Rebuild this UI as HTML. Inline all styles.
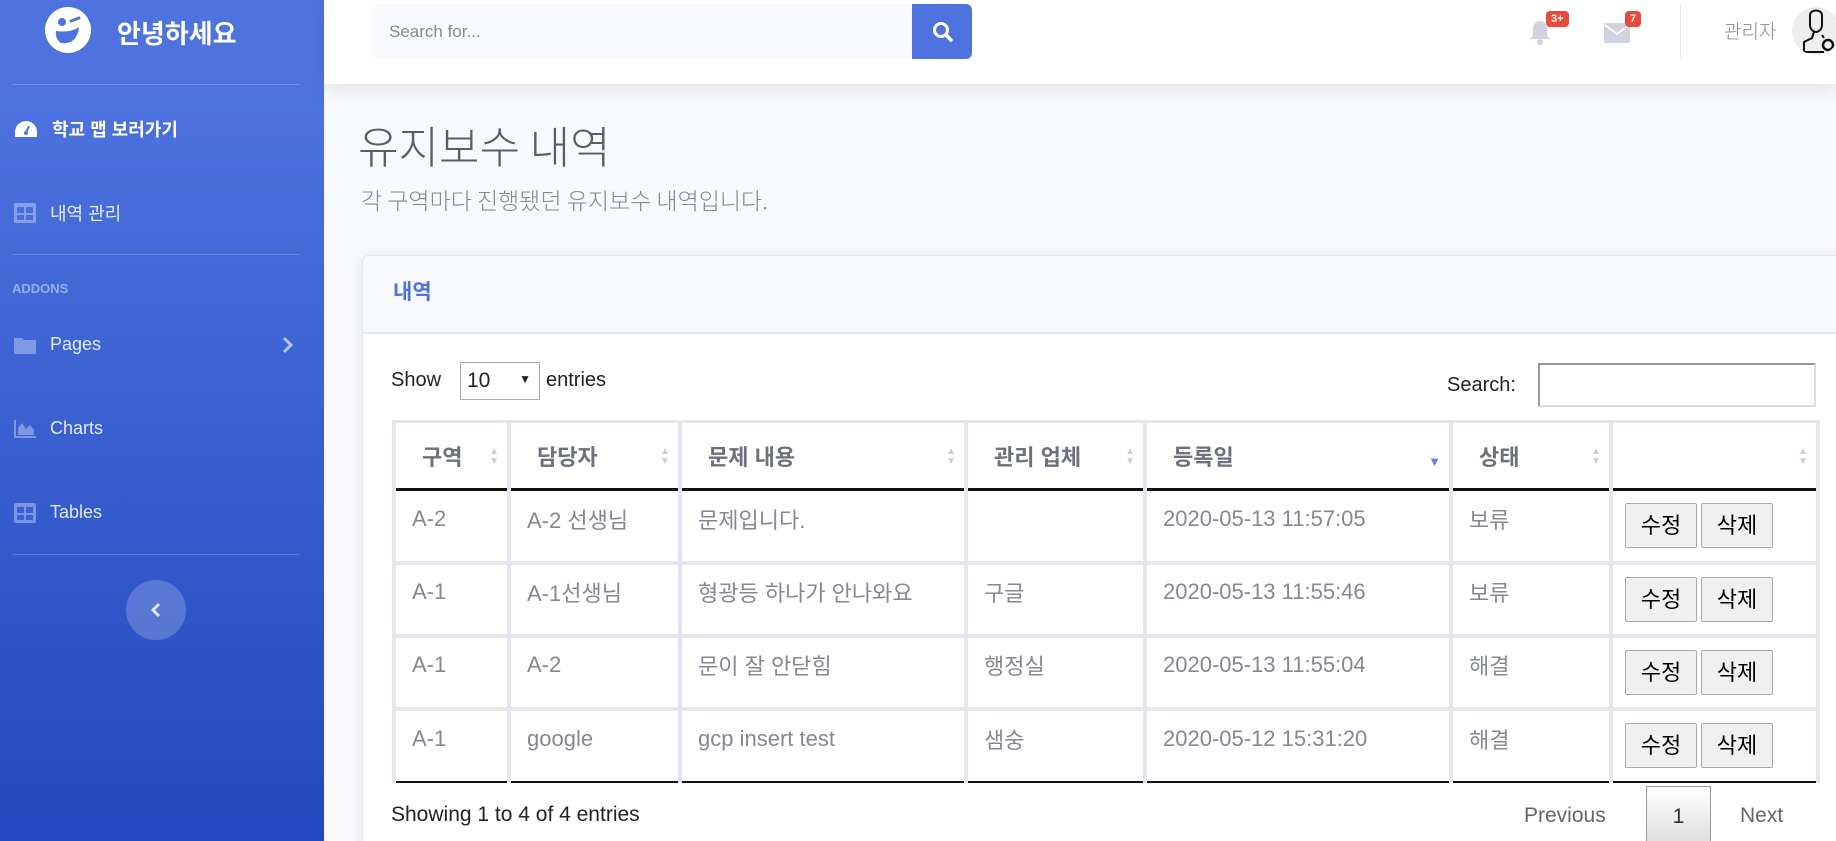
<!DOCTYPE html>
<html><head><meta charset="utf-8"><style>
*{box-sizing:border-box;margin:0;padding:0}
html,body{width:1836px;height:841px;overflow:hidden}
body{background:#f8f9fc;font-family:"Liberation Sans","Noto Sans CJK KR",sans-serif;position:relative}
.sb{position:absolute;left:0;top:0;width:324px;height:841px;background:linear-gradient(180deg,#4e73df 10%,#224abe 100%)}
.a{position:absolute}
.hr{position:absolute;left:12px;width:288px;height:1px;background:rgba(255,255,255,.2)}
.nav{position:absolute;left:14px;color:rgba(255,255,255,.85);font-size:18px;display:flex;align-items:center}
.nav svg{margin-right:14px}
.top{position:absolute;left:324px;top:0;width:1512px;height:84px;background:#fff;box-shadow:0 3px 18px rgba(58,59,69,.15)}
.card{position:absolute;left:362px;top:255px;width:1500px;height:600px;background:#fff;border:1px solid #e3e6f0;border-radius:6px;box-shadow:0 2px 12px rgba(58,59,69,.1)}
table{position:absolute;left:392px;top:420px;border-collapse:collapse;font-size:22px;color:#858796}
td,th{border:4px solid #e3e6f0;height:73px;text-align:left;vertical-align:middle;position:relative}
th{height:68px;color:#6e707e;font-weight:bold;padding-left:26px;border-bottom:3px solid #111;border-top:3px solid #e3e6f0}
tr:nth-child(2) td{border-top:3px solid #111}
td{padding-left:16px;padding-bottom:14px}
tr:last-child td{border-bottom:2px solid #111}
.s{position:absolute;right:8px;top:24px;font-size:10px;line-height:10px;color:#ccd;font-weight:normal}
.btn{display:inline-block;height:45px;width:72px;border:1px solid #aaa;background:#f0f0f0;color:#000;font-size:22px;text-align:center;line-height:43px;border-radius:2px;margin-right:4px}
td.b{padding-left:12px;padding-bottom:0}
.lt{font-family:"Noto Sans CJK KR","Liberation Sans",sans-serif;font-weight:300}
</style></head><body>
<div class="sb">
 <svg class="a" style="left:43px;top:5px" width="50" height="50" viewBox="0 0 50 50"><circle cx="25" cy="25" r="23" fill="#fff"/><circle cx="19" cy="17" r="4" fill="#4e73df"/><path d="M28 16 l8 -3" stroke="#4e73df" stroke-width="3" stroke-linecap="round"/><path d="M13 26 Q28 28 36 22 Q34 40 18 38 Q12 34 13 26Z" fill="#4e73df"/></svg>
 <div class="a" style="left:117px;top:14px;color:#fff;font-size:26px;font-weight:bold">안녕하세요</div>
 <div class="hr" style="top:84px"></div>
 <div class="nav" style="top:116px;color:#fff;font-weight:bold"><svg width="24" height="20" viewBox="0 0 24 20"><path d="M12 2A11 11 0 0 0 1 13v5h22v-5A11 11 0 0 0 12 2z" fill="#fff"/><path d="M12 14l3-7" stroke="#4e73df" stroke-width="2"/><circle cx="12" cy="14" r="2" fill="#4e73df"/></svg>학교 맵 보러가기</div>
 <div class="nav" style="top:200px"><svg width="22" height="20" viewBox="0 0 22 20"><rect width="22" height="20" rx="2" fill="rgba(255,255,255,.35)"/><rect x="3" y="4" width="7" height="6" fill="#4a6fdc"/><rect x="12" y="4" width="7" height="6" fill="#4a6fdc"/><rect x="3" y="12" width="7" height="5" fill="#4a6fdc"/><rect x="12" y="12" width="7" height="5" fill="#4a6fdc"/></svg>내역 관리</div>
 <div class="hr" style="top:254px"></div>
 <div class="a" style="left:12px;top:281px;color:rgba(255,255,255,.45);font-size:13px;font-weight:bold">ADDONS</div>
 <div class="nav" style="top:334px"><svg width="22" height="18" viewBox="0 0 22 18"><path d="M0 2h8l2 2h12v14H0z" fill="rgba(255,255,255,.35)"/></svg>Pages</div>
 <svg class="a" style="left:281px;top:336px" width="12" height="18" viewBox="0 0 12 18"><path d="M3 2l7 7-7 7" stroke="rgba(255,255,255,.6)" stroke-width="3" fill="none"/></svg>
 <div class="nav" style="top:418px"><svg width="22" height="18" viewBox="0 0 22 18"><path d="M0 0h2v16h20v2H0z M4 15V8l4-5 4 6 4-4 4 5v5z" fill="rgba(255,255,255,.35)"/></svg>Charts</div>
 <div class="nav" style="top:502px"><svg width="22" height="20" viewBox="0 0 22 20"><rect width="22" height="20" rx="2" fill="rgba(255,255,255,.35)"/><rect x="3" y="4" width="7" height="6" fill="#3a5fd6"/><rect x="12" y="4" width="7" height="6" fill="#3a5fd6"/><rect x="3" y="12" width="7" height="5" fill="#3a5fd6"/><rect x="12" y="12" width="7" height="5" fill="#3a5fd6"/></svg>Tables</div>
 <div class="hr" style="top:554px"></div>
 <div class="a" style="left:126px;top:580px;width:60px;height:60px;border-radius:50%;background:rgba(255,255,255,.2)"><svg class="a" style="left:24px;top:22px" width="12" height="16" viewBox="0 0 12 16"><path d="M9 2L3 8l6 6" stroke="rgba(255,255,255,.8)" stroke-width="3" fill="none"/></svg></div>
</div>
<div class="top">
 <div class="a" style="left:47px;top:4px;width:542px;height:55px;background:#f8f9fc;border-radius:6px 0 0 6px;color:#858796;font-size:17px;line-height:55px;padding-left:18px">Search for...</div>
 <div class="a" style="left:588px;top:4px;width:60px;height:55px;background:#4e73df;border-radius:0 6px 6px 0"><svg class="a" style="left:20px;top:17px" width="22" height="22" viewBox="0 0 22 22"><circle cx="9" cy="9" r="6.5" stroke="#fff" stroke-width="3" fill="none"/><path d="M14 14l5 5" stroke="#fff" stroke-width="3.5" stroke-linecap="round"/></svg></div>
 <svg class="a" style="left:1205px;top:20px" width="22" height="26" viewBox="0 0 22 26"><path d="M11 1c-5 0-7 4-7 8v6l-3 4h20l-3-4V9c0-4-2-8-7-8z" fill="#d1d3e2"/><circle cx="11" cy="22" r="3" fill="#d1d3e2"/></svg>
 <div class="a" style="left:1222px;top:11px;background:#e74a3b;color:#fff;font-size:11px;font-weight:bold;border-radius:4px;padding:2px 5px">3+</div>
 <svg class="a" style="left:1280px;top:23px" width="26" height="20" viewBox="0 0 26 20"><rect width="26" height="20" rx="2" fill="#d1d3e2"/><path d="M1 2l12 9 12-9" stroke="#fff" stroke-width="1.5" fill="none"/></svg>
 <div class="a" style="left:1301px;top:11px;background:#e74a3b;color:#fff;font-size:11px;font-weight:bold;border-radius:4px;padding:2px 5px">7</div>
 <div class="a" style="left:1356px;top:4px;width:1px;height:55px;background:#e3e6f0"></div>
 <div class="a lt" style="left:1400px;top:17px;color:#858796;font-size:19px">관리자</div>
 <div class="a" style="left:1468px;top:7px;width:48px;height:48px;border-radius:50%;background:#eee;overflow:hidden"><svg width="48" height="48" viewBox="0 0 48 48"><path d="M18 8c0-6 12-6 12 0v10c0 4-3 7-6 7s-6-3-6-7z M22 25l-2 6-8 4v10h20 M30 28l2 3" stroke="#111" stroke-width="2" fill="none"/><circle cx="36" cy="38" r="5" stroke="#111" stroke-width="2.5" fill="none"/></svg></div>
</div>
<div class="a lt" style="left:358px;top:112px;font-size:44px;color:#5a5c69">유지보수 내역</div>
<div class="a lt" style="left:361px;top:182px;font-size:23px;color:#858796">각 구역마다 진행됐던 유지보수 내역입니다.</div>
<div class="card">
 <div style="height:78px;background:#f8f9fc;border-bottom:2px solid #e3e6f0;border-radius:6px 6px 0 0;padding:20px 0 0 30px;color:#4e73df;font-size:21px;font-weight:bold">내역</div>
</div>
<div class="a" style="left:391px;top:369px;font-size:20px;color:#222">Show</div>
<div class="a" style="left:460px;top:362px;width:80px;height:38px;border:1px solid #aaa;background:#fff;font-size:21px;padding:6px 0 0 6px;color:#222">10<span style="position:absolute;right:8px;top:9px;font-size:12px">▼</span></div>
<div class="a" style="left:546px;top:369px;font-size:20px;color:#222">entries</div>
<div class="a" style="left:1447px;top:374px;font-size:20px;color:#222">Search:</div>
<div class="a" style="left:1538px;top:363px;width:278px;height:44px;border:2px solid #999;border-right-color:#ddd;border-bottom-color:#ddd;background:#fff"></div>
<table>
<tr><th style="width:115px">구역<span class="s">▲<br>▼</span></th><th style="width:171px">담당자<span class="s">▲<br>▼</span></th><th style="width:286px">문제 내용<span class="s">▲<br>▼</span></th><th style="width:179px">관리 업체<span class="s">▲<br>▼</span></th><th style="width:306px">등록일<span class="s" style="top:34px;color:#6a7ae0;font-size:13px">▼</span></th><th style="width:160px">상태<span class="s">▲<br>▼</span></th><th style="width:207px"><span class="s">▲<br>▼</span></th></tr>
<tr><td>A-2</td><td>A-2 선생님</td><td>문제입니다.</td><td></td><td>2020-05-13 11:57:05</td><td>보류</td><td class="b"><span class="btn">수정</span><span class="btn">삭제</span></td></tr>
<tr><td>A-1</td><td>A-1선생님</td><td>형광등 하나가 안나와요</td><td>구글</td><td>2020-05-13 11:55:46</td><td>보류</td><td class="b"><span class="btn">수정</span><span class="btn">삭제</span></td></tr>
<tr><td>A-1</td><td>A-2</td><td>문이 잘 안닫힘</td><td>행정실</td><td>2020-05-13 11:55:04</td><td>해결</td><td class="b"><span class="btn">수정</span><span class="btn">삭제</span></td></tr>
<tr><td>A-1</td><td>google</td><td>gcp insert test</td><td>샘숭</td><td>2020-05-12 15:31:20</td><td>해결</td><td class="b"><span class="btn">수정</span><span class="btn">삭제</span></td></tr>
</table>
<div class="a" style="left:391px;top:803px;font-size:21px;color:#222">Showing 1 to 4 of 4 entries</div>
<div class="a" style="left:1524px;top:804px;font-size:21px;color:#666">Previous</div>
<div class="a" style="left:1646px;top:786px;width:65px;height:60px;border:1px solid #999;background:linear-gradient(#fff,#ddd);font-size:21px;color:#333;text-align:center;padding-top:18px">1</div>
<div class="a" style="left:1740px;top:804px;font-size:21px;color:#666">Next</div>
</body></html>
